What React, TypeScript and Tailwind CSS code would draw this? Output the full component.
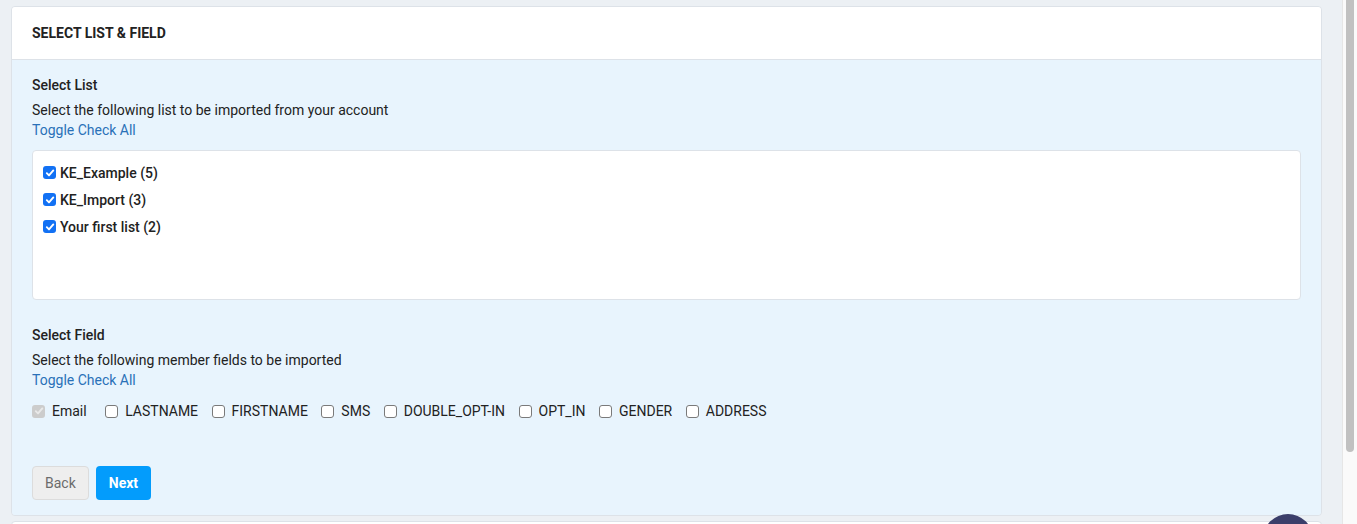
import React from 'react';

type Box = 'on' | 'off' | 'disabled';

const CheckBox = ({ state }: { state: Box }) => {
  if (state === 'off') {
    return <span className="inline-block h-[13px] w-[13px] shrink-0 rounded-[3px] border border-[#7a7a7a] bg-white" />;
  }
  const bg = state === 'on' ? 'bg-[#1271f4]' : 'bg-[#cccccc]';
  const stroke = state === 'on' ? '#ffffff' : '#e9e9e9';
  return (
    <span className={`inline-flex h-[13px] w-[13px] shrink-0 items-center justify-center rounded-[3px] ${bg}`}>
      <svg width="10" height="10" viewBox="0 0 10 10">
        <path d="M1.8 5.2 L4 7.4 L8.3 2.4" fill="none" stroke={stroke} strokeWidth="1.9" strokeLinecap="round" strokeLinejoin="round" />
      </svg>
    </span>
  );
};

const lists = ['KE_Example (5)', 'KE_Import (3)', 'Your first list (2)'];
const fields = ['LASTNAME', 'FIRSTNAME', 'SMS', 'DOUBLE_OPT-IN', 'OPT_IN', 'GENDER', 'ADDRESS'];

export default function App() {
  return (
    <div className="relative flex h-[524px] w-[1357px] overflow-hidden bg-[#ecf0f4] font-['Roboto',sans-serif] text-[#222]">
      <div className="flex-1 pl-[11px] pr-[20px] pt-[6px]">
        <div className="overflow-hidden rounded-[4px] border border-[#dde2e8]">
          <div className="flex h-[53px] items-center border-b border-[#dde2e8] bg-white px-[20px]">
            <h2 className="text-[14px] font-bold text-[#222]">SELECT LIST &amp; FIELD</h2>
          </div>
          <div className="bg-[#e8f4fd] px-[20px] pt-[15px] pb-[15px] text-[14px] leading-[20px]">
            <div className="font-medium">Select List</div>
            <p className="mt-[5px]">Select the following list to be imported from your account</p>
            <a className="text-[#2a71b8]">Toggle Check All</a>
            <div className="mt-[10px] h-[150px] rounded-[4px] border border-[#dde2e8] bg-white px-[10px] pt-[9px]">
              {lists.map((l) => (
                <label key={l} className="flex h-[27px] items-center gap-[4px] pb-[2px] font-medium">
                  <CheckBox state="on" />
                  <span>{l}</span>
                </label>
              ))}
            </div>
            <div className="mt-[25px] font-medium">Select Field</div>
            <p className="mt-[5px]">Select the following member fields to be imported</p>
            <a className="text-[#2a71b8]">Toggle Check All</a>
            <div className="mt-[11px] flex items-center gap-[13.5px]">
              <label className="mr-[5px] flex items-center gap-[7px]">
                <CheckBox state="disabled" />
                <span>Email</span>
              </label>
              {fields.map((f) => (
                <label key={f} className="flex items-center gap-[7px]">
                  <CheckBox state="off" />
                  <span>{f}</span>
                </label>
              ))}
            </div>
            <div className="mt-[45px] flex gap-[7px]">
              <button className="h-[34px] rounded-[4px] border border-[#dcdcdc] bg-[#eeeeee] px-[12px] text-[#6b6b6b]">Back</button>
              <button className="h-[34px] rounded-[4px] bg-[#039cfc] px-[13px] font-bold text-white">Next</button>
            </div>
          </div>
        </div>
        <div className="mt-[5px] h-[40px] rounded-[4px] border border-[#dde2e8] bg-white" />
      </div>
      <div className="flex w-[15px] justify-center border-l border-[#e6e6e6] bg-[#fafafa]">
        <div className="h-[452px] w-[8px] rounded-b-[4px] bg-[#c1c1c1]" />
      </div>
      <div className="absolute left-[1263px] top-[514px] h-[50px] w-[50px] rounded-full bg-[#3b3e6a]" />
    </div>
  );
}
